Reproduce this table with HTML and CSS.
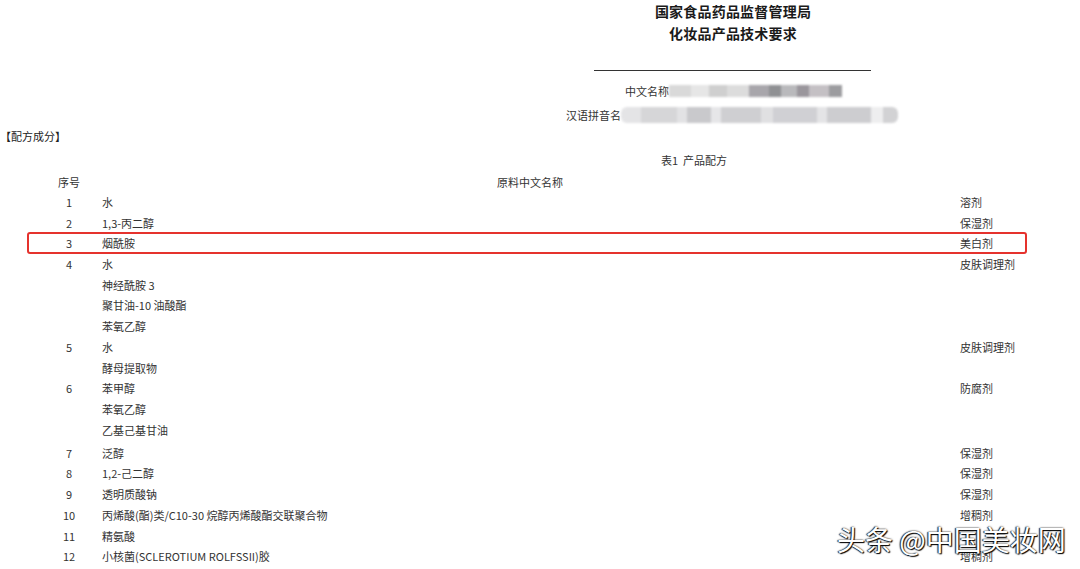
FILE: index.html
```html
<!DOCTYPE html>
<html lang="zh-CN">
<head>
    <meta charset="UTF-8">
    <title>化妆品产品技术要求</title>
    <link rel="stylesheet" href="styles.css">
</head>
<body>
    <div class="page">
        <div class="doc-head">
            <div class="title">国家食品药品监督管理局</div>
            <div class="title">化妆品产品技术要求</div>
            <div class="rule"></div>
        </div>
        <div class="field field-cn">
            <span>中文名称</span><span class="blur blur-cn"></span>
        </div>
        <div class="field field-py">
            <span>汉语拼音名</span><span class="blur blur-py"></span>
        </div>

        <div class="section">【配方成分】</div>
        <div class="caption">表1&nbsp;&nbsp;产品配方</div>

        <div class="formula">
            <div class="row head"><span class="no">序号</span><span class="name">原料中文名称</span><span class="use"></span></div>
            <div class="row"><span class="no">1</span><span class="name">水</span><span class="use">溶剂</span></div>
            <div class="row"><span class="no">2</span><span class="name">1,3-丙二醇</span><span class="use">保湿剂</span></div>
            <div class="row marked"><span class="no">3</span><span class="name">烟酰胺</span><span class="use">美白剂</span></div>
            <div class="row"><span class="no">4</span><span class="name">水</span><span class="use">皮肤调理剂</span></div>
            <div class="row"><span class="no"></span><span class="name">神经酰胺 3</span><span class="use"></span></div>
            <div class="row"><span class="no"></span><span class="name">聚甘油-10 油酸酯</span><span class="use"></span></div>
            <div class="row"><span class="no"></span><span class="name">苯氧乙醇</span><span class="use"></span></div>
            <div class="row"><span class="no">5</span><span class="name">水</span><span class="use">皮肤调理剂</span></div>
            <div class="row"><span class="no"></span><span class="name">酵母提取物</span><span class="use"></span></div>
            <div class="row"><span class="no">6</span><span class="name">苯甲醇</span><span class="use">防腐剂</span></div>
            <div class="row"><span class="no"></span><span class="name">苯氧乙醇</span><span class="use"></span></div>
            <div class="row group-end"><span class="no"></span><span class="name">乙基己基甘油</span><span class="use"></span></div>
            <div class="row"><span class="no">7</span><span class="name">泛醇</span><span class="use">保湿剂</span></div>
            <div class="row"><span class="no">8</span><span class="name">1,2-己二醇</span><span class="use">保湿剂</span></div>
            <div class="row"><span class="no">9</span><span class="name">透明质酸钠</span><span class="use">保湿剂</span></div>
            <div class="row"><span class="no">10</span><span class="name">丙烯酸(酯)类/C10-30 烷醇丙烯酸酯交联聚合物</span><span class="use">增稠剂</span></div>
            <div class="row"><span class="no">11</span><span class="name">精氨酸</span><span class="use"></span></div>
            <div class="row"><span class="no">12</span><span class="name">小核菌(SCLEROTIUM ROLFSSII)胶</span><span class="use">增稠剂</span></div>
        </div>

        <div class="watermark">头条 @中国美妆网</div>
    </div>
</body>
</html>
```

FILE: styles.css
```css
body {
    margin: 0;
    padding: 0;
    background-color: #fff;
    color: #333;
    font-family: "Noto Sans CJK SC", "Microsoft YaHei", sans-serif;
    font-size: 11px;
}
.page {
    position: relative;
    width: 1080px;
    height: 569px;
    overflow: hidden;
}
.doc-head {
    margin-left: 386px;
    text-align: center;
}
.title {
    font-size: 14px;
    line-height: 22px;
    font-weight: bold;
    color: #1a1a1a;
    letter-spacing: 0.2px;
}
.rule {
    width: 277px;
    height: 1px;
    margin: 26px 0 0 208px;
    background-color: #333;
}
.field {
    display: flex;
    align-items: center;
    line-height: 20px;
}
.field-cn {
    margin: 10px 0 0 625px;
}
.field-py {
    margin: 4px 0 0 566px;
}
.blur {
    display: block;
    filter: blur(1.2px);
}
.blur-cn {
    width: 173px;
    height: 12px;
    background: linear-gradient(90deg,
        #d9d9d9 0, #d9d9d9 22px, #e6e6e6 22px, #e6e6e6 40px,
        #cfcfcf 40px, #cfcfcf 58px, #dcdcdc 58px, #dcdcdc 80px,
        #a8a6ab 80px, #a8a6ab 100px, #8f9093 100px, #8f9093 112px,
        #b9b9bc 112px, #b9b9bc 128px, #9a969c 128px, #9a969c 140px,
        #c4c0c4 140px, #c4c0c4 160px, #9c9c9f 160px, #9c9c9f 173px);
}
.blur-py {
    width: 277px;
    height: 16px;
    border-radius: 6px;
    background: linear-gradient(90deg,
        #e4e4e6 0, #e4e4e6 20px, #d6d6d8 20px, #d6d6d8 56px,
        #e2e2e4 56px, #e2e2e4 66px, #c9c9cc 66px, #c9c9cc 90px,
        #e6e6e8 90px, #e6e6e8 100px, #cfcfd2 100px, #cfcfd2 140px,
        #e0e0e2 140px, #e0e0e2 152px, #d0d0d4 152px, #d0d0d4 196px,
        #e4e4e6 196px, #e4e4e6 206px, #cdcdd0 206px, #cdcdd0 250px,
        #eeeeef 250px, #eeeeef 262px, #d2d2d4 262px, #d2d2d4 277px);
}
.section {
    margin-top: 1px;
    line-height: 20px;
    color: #222;
}
.caption {
    margin: 4px 0 0 661px;
    line-height: 20px;
}
.formula {
    margin: 2px 0 0 38px;
}
.row {
    display: grid;
    grid-template-columns: 62px 860px 1fr;
    height: 20.7px;
    line-height: 20.7px;
    white-space: nowrap;
}
.row.head {
    height: 20px;
    line-height: 20px;
}
.no {
    text-align: center;
}
.name {
    padding-left: 2px;
}
.head .name {
    padding-left: 0;
    text-align: center;
}
.group-end {
    margin-bottom: 2.5px;
}
.marked {
    position: relative;
}
.marked::after {
    content: "";
    position: absolute;
    left: -11px;
    top: -1.5px;
    width: 1000px;
    height: 22px;
    box-sizing: border-box;
    border: 2px solid #e5322d;
    border-radius: 3px;
}
.watermark {
    position: absolute;
    left: 837px;
    top: 525px;
    font-size: 28px;
    line-height: 28px;
    color: #fff;
    white-space: nowrap;
    text-shadow: 1px 1px 1px #000, -1px 0 1px #222, 0 0 2px #333;
}
```
